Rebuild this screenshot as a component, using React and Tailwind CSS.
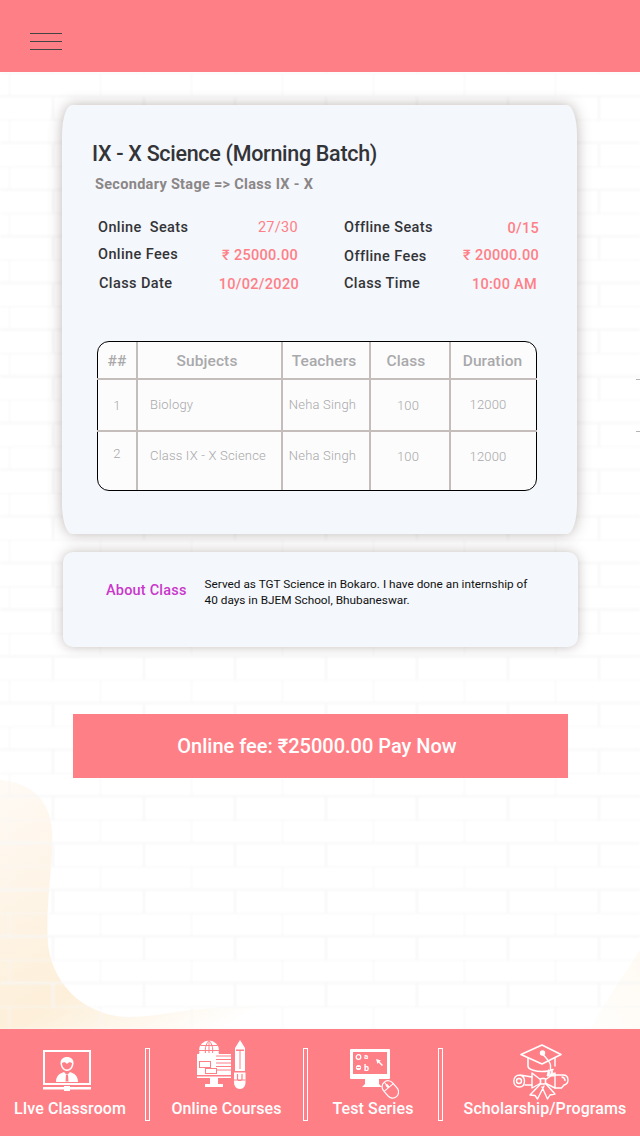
import React from "react";

const font = { fontFamily: '"Roboto", "Liberation Sans", sans-serif' };

function Background() {
  return (
    <svg className="absolute inset-0 w-full h-full" width="640" height="1136" viewBox="0 0 640 1136" aria-hidden="true">
      <defs>
        <pattern id="bricks" x="9" y="26.3" width="91" height="46.67" patternUnits="userSpaceOnUse">
          <path d="M0 0H91M0 23.33H91M0 0V23.33M44 23.33V46.67" stroke="#f7f7f7" strokeWidth="2" fill="none" />
        </pattern>
        <linearGradient id="cream" x1="0" y1="0" x2="0.75" y2="1">
          <stop offset="0" stopColor="#fffaf5" />
          <stop offset="0.65" stopColor="#fdefd9" />
          <stop offset="1" stopColor="#ffffff" />
        </linearGradient>
        <linearGradient id="creamR" x1="0" y1="1" x2="1" y2="0">
          <stop offset="0" stopColor="#fffefc" />
          <stop offset="1" stopColor="#fffaf3" />
        </linearGradient>
        <filter id="soft"><feGaussianBlur stdDeviation="0.9" /></filter>
      </defs>
      <rect width="640" height="1136" fill="#ffffff" />
      <path d="M0 780C28 782 50 798 52 830C54 865 45 900 48 945C54 990 90 1017 130 1017C170 1017 195 1002 300 1008V1030H0Z" fill="url(#cream)" />
      <path d="M590 1030C605 1000 625 975 640 950V1030Z" fill="url(#creamR)" />
      <rect y="72" width="640" height="958" fill="url(#bricks)" filter="url(#soft)" />
    </svg>
  );
}

function LiveIcon() {
  return (
    <svg width="50" height="42" viewBox="0 0 50 42" fill="#fff" className="mr-[6px] mb-[5px]">
      <path fillRule="evenodd" d="M1 1H49V36H1ZM3 3V34H47V3Z" />
      <path d="M1 38H22V37H28V38H49V40.5H28V42H22V40.5H1Z" />
      <path d="M25 8C29 8 31.5 10.5 31.5 14C31.5 18 29 22 25 22C21 22 18.500 18 18.500 14C18.500 10.500 21 8 25 8Z" />
      <path fill="#ff7f87" d="M20 14C22 12.500 23.500 13 25 15C26.500 13 28 12.500 30 14C30 17.500 28 20.500 25 20.500C22 20.500 20 17.500 20 14Z" />
      <path d="M14 33C14 27.500 17 24.500 22 23L23.800 25H26.200L28 23C33 24.500 36 27.500 36 33Z" />
      <path fill="#ff7f87" d="M24 25.500H26L26.500 32.500H23.500Z" />
    </svg>
  );
}

function CoursesIcon() {
  return (
    <svg width="50" height="50" viewBox="0 0 50 50" fill="#fff" className="mr-[11px] mb-[6px]">
      <circle cx="13" cy="10.500" r="10" />
      <path fill="none" stroke="#ff7f87" strokeWidth="1" d="M3 10.500H23M4.500 5.500H21.500M4.500 15.500H21.500M13 0.500V20.500M13 0.500C8 5.500 8 15.500 13 20.500M13 0.500C18 5.500 18 15.500 13 20.500" />
      <path d="M1 14H35V38H1Z" />
      <path fill="#fff" d="M3 13C5 19 9 21.500 13 21.500C17 21.500 21 19 23 13Z" />
      <path fill="none" stroke="#ff7f87" strokeWidth="1" d="M20 16H35M20 19.500H35M20 23H35M20 26.500H35M20 30H35" />
      <path fill="#ff7f87" d="M3 21H15V28H21V34H9V28H3Z" />
      <path fill="#fff" d="M4 22H14V27H4ZM10 29H20V33H10Z" />
      <path fill="#ff7f87" d="M1 35H35V36.500H1Z" />
      <path d="M14 38H22V44H27V47H9V44H14Z" />
      <path d="M44 0L49 8V31H39V8Z" />
      <path fill="#ff7f87" d="M40 9.500H48V11H40ZM43.500 11H44.500V29H43.500Z" />
      <path d="M38 32.500H49.500V42C49.500 46 47.500 49 44 49C40 49 38 46 38 42Z" />
      <path fill="none" stroke="#ff7f87" strokeWidth="1.200" d="M38 40H49.500M41.500 34V39C41.500 41 46 41 46 39V34" />
    </svg>
  );
}

function TestIcon() {
  return (
    <svg width="50" height="50" viewBox="0 0 50 50" fill="#fff" className="ml-[2px] -mb-[3px]">
      <path fillRule="evenodd" d="M1 1C1 0.500 1.500 0 2 0H40C40.500 0 41 0.500 41 1V29C41 29.500 40.500 30 40 30H30V35L33 38H13L16 35V30H2C1.500 30 1 29.500 1 29ZM4 3V25H38V3Z" />
      <circle cx="9.500" cy="8" r="2.300" fill="none" stroke="#fff" strokeWidth="1.300" />
      <circle cx="9.500" cy="18.500" r="2.600" />
      <rect x="7.800" y="18" width="3.400" height="1" fill="#ff7f87" />
      <text x="15" y="10" fill="#fff" fontSize="8" fontWeight="700" fontFamily="Roboto, sans-serif">a</text>
      <text x="15" y="21.500" fill="#fff" fontSize="9" fontWeight="700" fontFamily="Roboto, sans-serif">b</text>
      <path d="M27 10L32 11.500L30.500 12.500L34 16L33 17L29.500 13.500L28.500 15Z" />
      <g transform="rotate(-40 41 40)">
        <rect x="35" y="31" width="12" height="19" rx="6" fill="#ff7f87" stroke="#fff" strokeWidth="1.200" />
        <path d="M35 38H47M41 31V38" stroke="#fff" strokeWidth="1" fill="none" />
        <rect x="39.800" y="34" width="2.400" height="4" rx="1" fill="#fff" />
      </g>
    </svg>
  );
}

function ScholarIcon() {
  return (
    <svg width="56" height="56" viewBox="0 0 56 56" fill="none" stroke="#fff" strokeWidth="1.400" strokeLinejoin="round" strokeLinecap="round" className="mr-[8px] -mb-[4px]">
      <path d="M29 1L48 10.500L29 20L8 10.500Z" strokeWidth="1.600" />
      <path d="M15 14V22C15 26 24 27.500 29 27.500C33 27.500 37 27 40 25.500" strokeWidth="1.600" />
      <path d="M42 13.500V22" />
      <circle cx="29.500" cy="9" r="2" fill="#fff" />
      <path d="M30 10.500C34 15 37 18 37.500 21V26" />
      <path d="M35.500 26L34 32H37ZM38.500 26L37.500 32H41Z" fill="#fff" strokeWidth="1" />
      <path d="M28 36L19 29V44L28 39" />
      <path d="M32 36L42 29V44L32 39" />
      <rect x="27.500" y="34.500" width="5" height="5.500" rx="1" fill="#ff7f87" strokeWidth="1.600" />
      <path d="M27.500 40L17 51L22 51.500L24.500 55L31 42M33 40L42 50L37 51L34.500 55L29 43" />
      <path d="M19 33L7 31C3 31 0.800 33.500 0.800 37C0.800 40.500 3 43 6.500 43C10 43 11.500 40.500 11.500 37C11.500 34.500 10 32 7 31" />
      <circle cx="6" cy="37" r="2.500" />
      <path d="M12 41H19M42 31H50C53 31 55 33 55 36C55 39 53 40.500 51 41L48.500 44H42" />
      <path d="M49 33C51 33.500 52 35 52 36.500" />
    </svg>
  );
}

function Stat({ label, value, labelClass, valueClass }) {
  return (
    <div className="flex justify-between h-[28px] items-start">
      <span className={"text-[14.500px] leading-[20px] font-medium tracking-[0.4px] text-[#333438] " + labelClass}>{label}</span>
      <span className={"text-[14.500px] leading-[20px] font-medium tracking-[0.3px] text-[#ff7f87] " + valueClass}>{value}</span>
    </div>
  );
}

const cols = "grid grid-cols-[40px_145px_88px_80px_85px]";
const cell = "border-r-2 border-[#c5bcbc] flex items-center justify-center";
const head = "text-[15.500px] font-medium text-[#a9a9ab] tracking-[0.1px] pt-[3px]";
const body = "text-[13px] font-light text-[#a8a8aa] tracking-[0.2px]";

function Row({ n, subject, className, nClass, sClass, dClass, tClass, cClass }) {
  return (
    <div className={cols + " " + className}>
      <div className={cell + " " + body + " " + nClass}>{n}</div>
      <div className={cell + " " + body + " " + sClass}>{subject}</div>
      <div className={cell + " " + body + " " + tClass}>Neha Singh</div>
      <div className={cell + " " + body + " " + cClass}>100</div>
      <div className={"flex items-center justify-center " + body + " " + dClass}>12000</div>
    </div>
  );
}

function NavItem({ icon, label, className }) {
  return (
    <div className={"flex flex-col items-center justify-end " + className}>
      {icon}
      <span className="text-[16px] leading-[20px] font-medium tracking-[0.1px] text-white whitespace-nowrap mt-[3px] mb-[17px]">{label}</span>
    </div>
  );
}

function Sep({ className = "" }) {
  return <div className={"w-[5px] h-[73px] border border-white shrink-0 mt-[19px] " + className} />;
}

export default function App() {
  return (
    <div className="relative w-[640px] h-[1136px] overflow-hidden flex flex-col bg-white" style={font}>
      <Background />
      <header className="relative h-[72px] bg-[#ff7f87] shrink-0 pl-[30px] pt-[33px]">
        <div className="w-[32px] flex flex-col">
          <div className="h-px bg-[#444]" />
          <div className="h-px bg-[#444] mt-[7px]" />
          <div className="h-px bg-[#444] mt-[7px]" />
        </div>
      </header>

      <main className="relative flex-1 pt-[33px]">
        <section className="ml-[62px] w-[515px] h-[429px] bg-[#f4f7fb] rounded-[10px/30px] shadow-[0_0_14px_rgba(110,90,90,0.45)] pt-[35px]">
          <h1 className="ml-[30px] text-[21.500px] leading-[28px] font-medium text-[#333438] tracking-[-0.3px]">IX - X Science (Morning Batch)</h1>
          <p className="ml-[33px] mt-[7px] text-[14.500px] leading-[20px] font-bold text-[#8b8687] tracking-[0.3px]">Secondary Stage =&gt; Class IX - X</p>
          <div className="flex mt-[23px] ml-[36px]">
            <div className="w-[201px]">
              <Stat label="Online  Seats" value="27/30" labelClass="whitespace-pre" valueClass="mr-px font-normal" />
              <Stat label="Online Fees" value="₹ 25000.00" labelClass="-mt-px" valueClass="mr-px" />
              <Stat label="Class Date" value="10/02/2020" labelClass="ml-px" valueClass="mt-px" />
            </div>
            <div className="w-[195px] ml-[45px]">
              <Stat label="Offline Seats" value="0/15" valueClass="mt-px" />
              <Stat label="Offline Fees" value="₹ 20000.00" labelClass="mt-px" />
              <Stat label="Class Time" value="10:00 AM" valueClass="mr-[2px] mt-px" />
            </div>
          </div>
          <div className="ml-[35px] mt-[39px] w-[440px] h-[150px] border border-black rounded-[12px] bg-[#fcfcfc]">
            <div className={cols + " h-[36px]"}>
              <div className={cell + " " + head}>##</div>
              <div className={cell + " " + head + " pr-[5px]"}>Subjects</div>
              <div className={cell + " " + head + " pr-[4px]"}>Teachers</div>
              <div className={cell + " " + head + " pr-[8px]"}>Class</div>
              <div className={"flex items-center justify-center " + head + " pr-[2px]"}>Duration</div>
            </div>
            <div className="h-[2px] bg-[#c5bcbc] -mx-px" />
            <Row n="1" subject="Biology" className="h-[50px]" nClass="pt-[1px]" sClass="justify-start pl-[12px] pb-[1px]" dClass="pr-[11px]" tClass="pr-[7px] pb-px" cClass="pt-[1px] pr-[4px]" />
            <div className="h-[2px] bg-[#c5bcbc] -mx-px" />
            <Row n="2" subject="Class IX - X Science" className="h-[58px]" nClass="pb-[14px]" sClass="pb-[10px] pr-[3px]" dClass="pb-[9px] pr-[11px]" tClass="pb-[11px] pr-[7px]" cClass="pb-[8px] pr-[4px]" />
          </div>
        </section>

        <section className="ml-[63px] mt-[18px] w-[515px] h-[95px] bg-[#f4f7fb] rounded-[10px] shadow-[0_0_12px_rgba(110,90,90,0.4)] flex items-start">
          <span className="ml-[43px] mt-[29px] text-[14.500px] leading-[20px] font-medium text-[#c937cb] tracking-[0.2px] whitespace-nowrap">About Class</span>
          <p className="ml-[18px] mt-[24px] w-[335px] text-[11.800px] leading-[16px] text-[#111]">Served as TGT Science in Bokaro. I have done an internship of 40 days in BJEM School, Bhubaneswar.</p>
        </section>

        <button className="block ml-[73px] mt-[67px] w-[495px] h-[64px] pr-[7px] bg-[#ff7f87] text-white text-[20px] font-medium">Online fee: ₹25000.00 Pay Now</button>

        <div className="absolute right-0 top-[307px] w-[4px] h-px bg-[#b9b2b2]" />
        <div className="absolute right-0 top-[359px] w-[4px] h-px bg-[#b9b2b2]" />
      </main>

      <footer className="relative h-[107px] shrink-0 bg-[#ff7f87] flex items-start">
        <NavItem className="w-[140px] h-full" icon={<LiveIcon />} label="LIve Classroom" />
        <Sep className="ml-[5px]" />
        <NavItem className="w-[153px] h-full" icon={<CoursesIcon />} label="Online Courses" />
        <Sep />
        <NavItem className="w-[130px] h-full" icon={<TestIcon />} label="Test Series" />
        <Sep />
        <NavItem className="flex-1 h-full pl-[7px]" icon={<ScholarIcon />} label="Scholarship/Programs" />
      </footer>
    </div>
  );
}
